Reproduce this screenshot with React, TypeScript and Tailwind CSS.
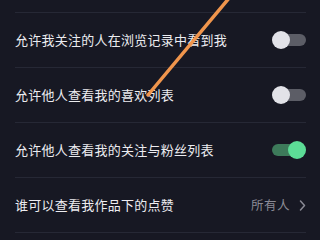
import React from 'react';

interface RowProps {
  label: string;
  on?: boolean;
  value?: string;
}

const Toggle: React.FC<{on: boolean}> = ({on}) => (
  <div className="relative w-[34px] h-[18px] flex items-center">
    <div
      className={
        on
          ? 'absolute left-0 right-[4px] h-[12px] rounded-full bg-[#3d7a5a]'
          : 'absolute left-[4px] right-0 h-[12px] rounded-full bg-[#5c5d66]'
      }
    />
    <div
      className={
        on
          ? 'absolute right-0 w-[18px] h-[18px] rounded-full bg-[#5cdc96]'
          : 'absolute left-0 w-[18px] h-[18px] rounded-full bg-[#e2e2e8]'
      }
    />
  </div>
);

const Row: React.FC<RowProps> = props => (
  <div className="h-[55px] flex items-center justify-between border-b border-[#262835]">
    <span className="text-[13px] tracking-[0.25px] text-[#ececf0]">{props.label}</span>
    {props.value ? (
      <div className="flex items-center gap-[9px] text-[#8a8a95]">
        <span className="text-[12.5px] tracking-[0.5px]">{props.value}</span>
        <svg width="7" height="11" viewBox="0 0 7 11" fill="none">
          <path d="M1.5 1 L5.5 5.5 L1.5 10" stroke="#8a8a95" strokeWidth="1.5" strokeLinecap="round" strokeLinejoin="round" />
        </svg>
      </div>
    ) : (
      <Toggle on={!!props.on} />
    )}
  </div>
);

export default function App() {
  return (
    <div
      className="relative w-[320px] h-[240px] overflow-hidden bg-[#171823]"
      style={{fontFamily: '"Noto Sans CJK SC", "Noto Sans", sans-serif'}}
    >
      <div className="px-[15px] pr-[14px]">
        <div className="h-[13px] border-b border-[#262835]" />
        <Row label="允许我关注的人在浏览记录中看到我" />
        <Row label="允许他人查看我的喜欢列表" />
        <Row label="允许他人查看我的关注与粉丝列表" on />
        <Row label="谁可以查看我作品下的点赞" value="所有人" />
      </div>
      <svg className="absolute inset-0 pointer-events-none" width="320" height="240">
        <line x1="230" y1="-3" x2="148" y2="95" stroke="#f0954c" strokeWidth="3.5" strokeLinecap="round" />
      </svg>
    </div>
  );
}
